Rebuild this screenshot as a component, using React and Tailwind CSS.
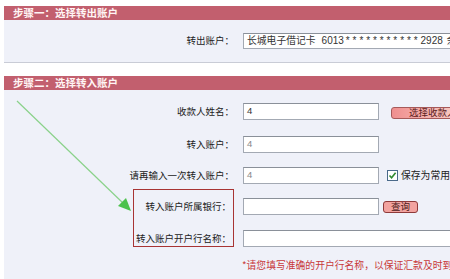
export default function App() {
  const label = "w-[230px] shrink-0 text-right text-[9.5px] leading-none text-[#222] whitespace-nowrap";
  const input = "ml-[9px] shrink-0 h-[17px] border border-[#a3a9b3] border-t-[#8a9099] bg-white flex items-center pl-[3px] font-['Liberation_Sans',sans-serif] text-[9.5px]";
  return (
    <div className="relative w-[450px] h-[279px] overflow-hidden bg-white font-['Noto_Sans_CJK_SC',sans-serif] text-[#222]">
      <div className="pt-[6px] pl-[4px]">
        {/* Section 1 */}
        <div className="h-[14px] bg-[#c25f6e] flex items-center pl-[9px] text-[10.5px] font-bold leading-none text-[#fff4f4] whitespace-nowrap">
          步骤一：选择转出账户
        </div>
        <div className="h-[43px] bg-[#eff1f9] border-b border-[#c9ccd6] pt-[13px]">
          <div className="flex items-center h-[16px]">
            <div className={label}>转出账户：</div>
            <div className="ml-[9px] shrink-0 w-[260px] h-[16px] border border-[#a3a9b3] border-t-[#8a9099] bg-white flex items-center pl-[3px] text-[9.8px] leading-none whitespace-nowrap text-[#333]">
              <span>长城电子借记卡</span>
              <span className="font-['Liberation_Sans',sans-serif] text-[10px] ml-[6px]">6013</span>
              <span className="font-['Liberation_Sans',sans-serif] text-[10px] tracking-[2.9px] ml-[2px]">***********</span>
              <span className="font-['Liberation_Sans',sans-serif] text-[10px]">2928</span>
              <span className="ml-[4px]">余额</span>
            </div>
          </div>
        </div>

        {/* Section 2 */}
        <div className="mt-[13px] h-[14px] bg-[#c25f6e] flex items-center pl-[9px] text-[10.5px] font-bold leading-none text-[#fff4f4] whitespace-nowrap">
          步骤二：选择转入账户
        </div>
        <div className="h-[200px] bg-[#eff1f9] pt-[13px]">
          <div className="flex items-center h-[17px]">
            <div className={label}>收款人姓名：</div>
            <div className={input + " w-[136px] text-[#333]"}>4</div>
            <button className="ml-[12px] mt-[3px] shrink-0 w-[70px] h-[12px] rounded-[3px] border border-[#a65a5a] bg-gradient-to-r from-[#ef8f8f] to-[#f8cfc8] text-[9.5px] leading-none text-[#5a2020] pl-[17px] text-left whitespace-nowrap">
              选择收款人
            </button>
          </div>
          <div className="flex items-center h-[17px] mt-[16px]">
            <div className={label}>转入账户：</div>
            <div className={input + " w-[136px] text-[#888]"}>4</div>
          </div>
          <div className="flex items-center h-[17px] mt-[14px]">
            <div className={label}>请再输入一次转入账户：</div>
            <div className={input + " w-[136px] text-[#888]"}>4</div>
            <div className="ml-[8px] shrink-0 w-[11px] h-[11px] border border-[#4a6a8a] bg-white flex items-center justify-center">
              <svg width="9" height="9" viewBox="0 0 9 9">
                <path d="M1.5 4.5 L3.6 6.8 L7.6 1.8" fill="none" stroke="#2f8a2f" strokeWidth="1.6" />
              </svg>
            </div>
            <span className="ml-[3px] text-[9.8px] leading-none whitespace-nowrap">保存为常用收款人</span>
          </div>
          <div className="flex items-center h-[17px] mt-[14px]">
            <div className={label + " pr-[3px]"}>转入账户所属银行：</div>
            <div className={input + " w-[136px]"}></div>
            <button className="ml-[4px] shrink-0 w-[35px] h-[12px] rounded-[3px] border border-[#8e3a3a] bg-[#f2a3a0] text-[9.5px] leading-none text-[#4a1a1a] flex items-center justify-center">
              查询
            </button>
          </div>
          <div className="flex items-center h-[17px] mt-[15px]">
            <div className={label + " pr-[3px]"}>转入账户开户行名称：</div>
            <div className={input + " w-[230px]"}></div>
          </div>
          <div className="mt-[14px] pl-[238px] text-[9.8px] leading-none text-[#c8383a] whitespace-nowrap">
            *请您填写准确的开户行名称，以保证汇款及时到账
          </div>
        </div>
      </div>

      {/* Annotation overlays */}
      <div className="absolute left-[133px] top-[189px] w-[101px] h-[58px] border border-[#a83434]"></div>
      <svg className="absolute left-0 top-0" width="450" height="279" viewBox="0 0 450 279">
        <line x1="17" y1="101" x2="124" y2="204" stroke="#8ad28a" strokeWidth="1.2" />
        <polygon points="131,211 118,206 126,198" fill="#4cc24c" />
      </svg>
    </div>
  );
}
